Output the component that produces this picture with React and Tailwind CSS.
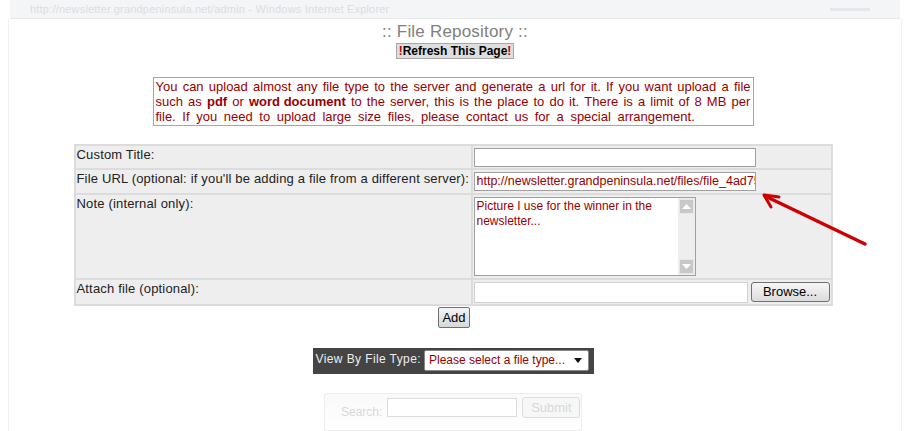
import React from "react";

const F = { fontFamily: '"Liberation Sans", Arial, sans-serif' };

function ScrollBtn({ up }) {
  return (
    <div className="w-[15px] h-[15px] bg-[#c8c8c8] border border-[#e8e8e8] flex items-center justify-center">
      <svg width="9" height="5" viewBox="0 0 9 5">
        {up ? <polygon points="0,5 9,5 4.5,0" fill="#fff" /> : <polygon points="0,0 9,0 4.5,5" fill="#fff" />}
      </svg>
    </div>
  );
}

export default function App() {
  return (
    <div className="relative w-[910px] h-[431px] bg-white overflow-hidden text-[12px]" style={F}>
      {/* faded window title bar */}
      <div className="h-[19px] mx-[10px] bg-[#f4f5f7] border-b border-[#e6e8ec] flex items-center justify-between px-[20px]">
        <span className="text-[11px] text-[#dadde2] tracking-[0.2px]">http://newsletter.grandpeninsula.net/admin - Windows Internet Explorer</span>
        <span className="w-[40px] h-[3px] bg-[#e4e7eb] mr-[10px]"></span>
      </div>

      <div className="mx-[8px] border-l border-r border-[#f2f2f2] h-[412px] flex flex-col items-center">
        <div className="mt-[3px] text-[17px] leading-[20px] text-[#808080] tracking-[0.2px]">:: File Repository ::</div>
        <button className="mt-[1px] h-[17px] px-[2px] bg-[#dedede] border border-[#a8a8a8] text-[12px] font-bold leading-[14px] text-black">
          <span className="text-[#cc0000]">!</span>Refresh This Page<span className="text-[#cc0000]">!</span>
        </button>

        <div className="mt-[18px] -ml-[4px] w-[601px] border border-[#ff9900] px-[2px] py-[1px] text-[13px] leading-[15px] text-[#990000]">
          <div className="text-justify [text-align-last:justify] whitespace-nowrap flex justify-between">
            {"You can upload almost any file type to the server and generate a url for it. If you want upload a file".split(" ").map((w, i) => (
              <span key={i}>{w}</span>
            ))}
          </div>
          <div className="flex justify-between whitespace-nowrap">
            {["such", "as", <b key="b1">pdf</b>, "or", <b key="b2">word document</b>, "to", "the", "server,", "this", "is", "the", "place", "to", "do", "it.", "There", "is", "a", "limit", "of", "8", "MB", "per"].map((w, i) => (
              <span key={i}>{w}</span>
            ))}
          </div>
          <div className="whitespace-nowrap [word-spacing:3px]">file. If you need to upload large size files, please contact us for a special arrangement.</div>
        </div>

        <table className="mt-[18px] -ml-[4px] w-[759px] bg-[#dcdcdc] border-separate border-spacing-[2px] text-[13px] text-[#222] tracking-[0.17px]">
          <tbody>
            <tr className="h-[22px]">
              <td className="bg-[#eeeeee] w-[395px] align-top px-[1px] pt-[1px] leading-[15px]">Custom Title:</td>
              <td className="bg-[#eeeeee] align-middle px-[1px]">
                <div className="w-[282px] h-[19px] bg-white border border-[#a0a0a0]"></div>
              </td>
            </tr>
            <tr className="h-[23px]">
              <td className="bg-[#eeeeee] align-top px-[1px] pt-[1px] leading-[15px] whitespace-nowrap">File URL (optional: if you'll be adding a file from a different server):</td>
              <td className="bg-[#eeeeee] align-middle px-[1px]">
                <div className="w-[282px] h-[19px] bg-white border border-[#a0a0a0] text-[#990000] text-[12.5px] tracking-normal leading-[17px] pl-[2px] overflow-hidden whitespace-nowrap">http://newsletter.grandpeninsula.net/files/file_4ad75c</div>
              </td>
            </tr>
            <tr className="h-[83px]">
              <td className="bg-[#eeeeee] align-top px-[1px] pt-[1px] leading-[15px]">Note (internal only):</td>
              <td className="bg-[#eeeeee] align-top px-[1px] pt-[2px]">
                <div className="w-[222px] h-[79px] bg-white border border-[#a0a0a0] flex">
                  <div className="flex-1 text-[#990000] text-[12px] tracking-normal leading-[15px] pl-[2px] pt-[1px]">Picture I use for the winner in the newsletter...</div>
                  <div className="w-[17px] bg-[#eeeeee] flex flex-col justify-between p-[1px]">
                    <ScrollBtn up />
                    <ScrollBtn />
                  </div>
                </div>
              </td>
            </tr>
            <tr className="h-[24px]">
              <td className="bg-[#eeeeee] align-top px-[1px] pt-[1px] leading-[15px]">Attach file (optional):</td>
              <td className="bg-[#eeeeee] align-middle px-[1px]">
                <div className="flex items-center gap-[3px]">
                  <div className="w-[274px] h-[21px] bg-white border border-[#d0d0d0]"></div>
                  <button className="w-[79px] h-[20px] rounded-[3px] border border-[#707070] bg-gradient-to-b from-[#f6f6f6] to-[#dcdcdc] text-[13px] tracking-normal leading-[16px] text-black">Browse...</button>
                </div>
              </td>
            </tr>
          </tbody>
        </table>

        <button className="mt-[1px] -ml-[2px] w-[32px] h-[22px] rounded-[2px] border border-[#707070] bg-gradient-to-b from-[#f4f4f4] to-[#d8d8d8] text-[13px] leading-[18px] text-black">Add</button>

        <div className="mt-[20px] -ml-[4px] w-[281px] h-[27px] bg-[#444444] flex items-center pl-[3px] gap-[3px]">
          <span className="text-[#eeeeee] text-[12px] tracking-[0.4px] leading-[14px] -mt-[4px] whitespace-nowrap">View By File Type:</span>
          <div className="w-[165px] h-[21px] bg-white border border-[#888] rounded-[2px] flex items-center justify-between pl-[4px] pr-[6px]">
            <span className="text-[#990000] text-[12px] leading-[15px] whitespace-nowrap">Please select a file type...</span>
            <svg width="8" height="5" viewBox="0 0 8 5"><polygon points="0,0 8,0 4,5" fill="#111" /></svg>
          </div>
        </div>

        <div className="mt-[19px] -ml-[4px] w-[258px] h-[40px] border border-[#e8e8e8] rounded-t-[2px] bg-gradient-to-b from-[#f8f8f8] to-white flex items-start pt-[4px] pl-[16px] gap-[5px] opacity-70">
          <span className="mt-[5px] text-[12px] text-[#c8c8c8]">Search:</span>
          <div className="w-[130px] h-[19px] border border-[#d0d0d0] bg-white"></div>
          <button className="w-[58px] h-[21px] -mt-[1px] rounded-[3px] border border-[#d0d0d0] bg-[#f4f4f4] text-[13px] text-[#c8c8c8]">Submit</button>
        </div>
      </div>

      {/* red annotation arrow */}
      <svg className="absolute left-0 top-0 pointer-events-none" width="910" height="431">
        <line x1="865" y1="244" x2="765" y2="196" stroke="#cc0000" strokeWidth="3.5" strokeLinecap="round" />
        <polyline points="779,197 764,195 771,207" fill="none" stroke="#cc0000" strokeWidth="3" strokeLinecap="round" strokeLinejoin="round" />
      </svg>
    </div>
  );
}
